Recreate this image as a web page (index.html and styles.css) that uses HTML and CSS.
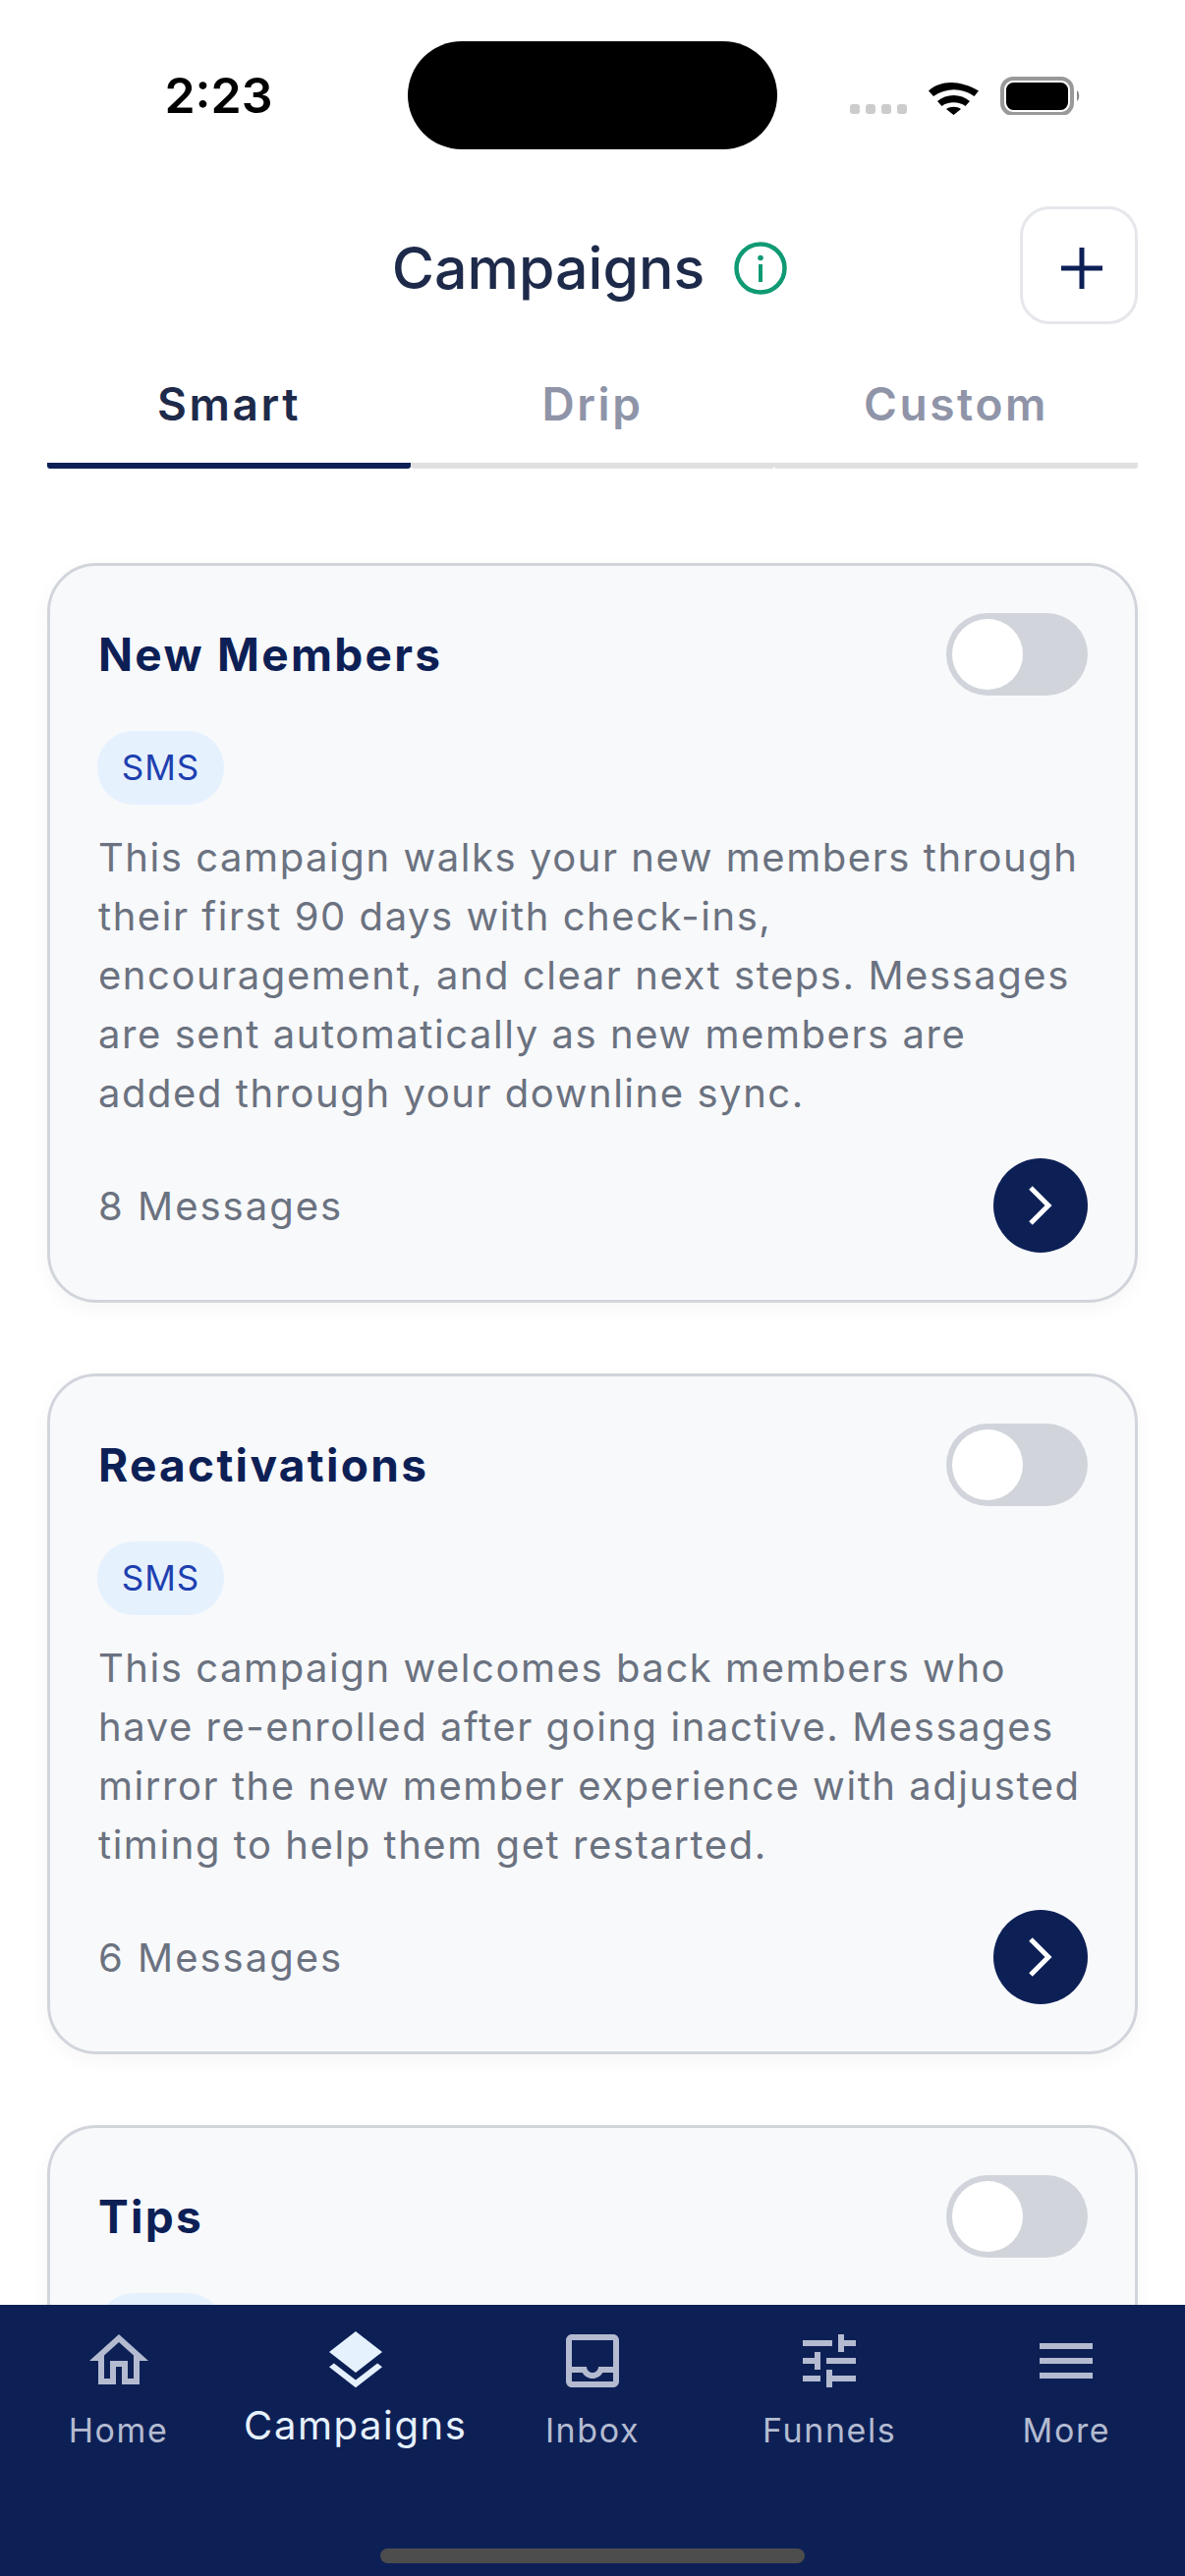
FILE: index.html
```html
<!DOCTYPE html>
<html>
<head>
  <title>Campaigns</title>
  <link rel="stylesheet" href="styles.css">
</head>
<body>
  <div class="statusbar">
    <div class="time">2:23</div>
    <div class="island"></div>
    <div class="status-icons">
      <svg width="235" height="39" viewBox="0 0 235 39">
        <rect x="0" y="28" width="10" height="10" rx="3" fill="#cccccc"/>
        <rect x="16" y="28" width="10" height="10" rx="3" fill="#cccccc"/>
        <rect x="32" y="28" width="10" height="10" rx="3" fill="#cccccc"/>
        <rect x="48" y="28" width="10" height="10" rx="3" fill="#cccccc"/>
        <path d="M80 14.500C92 3 112 3 131 14.500L126.500 20C114 11 98 11 85 20Z M89 25C98 17 113 17 122 25L117.500 30C111 25 100 25 93.500 30Z M98 33C102 30 109 30 113 33L105.500 39Z" fill="#000"/>
        <rect x="155" y="2" width="71" height="36" rx="11" fill="none" stroke="#999999" stroke-width="4"/>
        <rect x="159" y="6" width="63" height="28" rx="7.500" fill="#000"/>
        <path d="M231 14C234 16 234 23 231 25Z" fill="#888888"/>
      </svg>
    </div>
  </div>

  <div class="header">
    <div></div>
    <div class="title-wrap">
      <h1 class="title">Campaigns</h1>
      <svg class="info-icon" width="54" height="54" viewBox="0 0 54 54">
        <circle cx="27" cy="27" r="24.500" fill="none" stroke="#0f9a74" stroke-width="4.500"/>
        <circle cx="27" cy="16.500" r="2.800" fill="#0f9a74"/>
        <rect x="25" y="23" width="4" height="18" fill="#0f9a74"/>
      </svg>
    </div>
    <button class="add-btn">
      <svg width="42" height="42" viewBox="0 0 42 42"><path d="M21 0V42M0 21H42" stroke="#0d2056" stroke-width="5"/></svg>
    </button>
  </div>

  <div class="tabs">
    <div class="tab active">Smart</div>
    <div class="tab">Drip</div>
    <div class="tab">Custom</div>
  </div>

  <div class="content">
    <div class="card">
      <div class="card-top">
        <h2 class="card-title">New Members</h2>
        <div class="toggle"><div class="knob"></div></div>
      </div>
      <div class="badge">SMS</div>
      <p class="desc">This campaign walks your new members through their first 90 days with check-ins, encouragement, and clear next steps. Messages are sent automatically as new members are added through your downline sync.</p>
      <div class="card-bottom">
        <span class="count">8 Messages</span>
        <div class="go-btn">
          <svg width="26" height="42" viewBox="0 0 26 42"><path d="M3 3L21 21L3 39" fill="none" stroke="#fff" stroke-width="5"/></svg>
        </div>
      </div>
    </div>

    <div class="card">
      <div class="card-top">
        <h2 class="card-title">Reactivations</h2>
        <div class="toggle"><div class="knob"></div></div>
      </div>
      <div class="badge">SMS</div>
      <p class="desc">This campaign welcomes back members who have re-enrolled after going inactive. Messages mirror the new member experience with adjusted timing to help them get restarted.</p>
      <div class="card-bottom">
        <span class="count">6 Messages</span>
        <div class="go-btn">
          <svg width="26" height="42" viewBox="0 0 26 42"><path d="M3 3L21 21L3 39" fill="none" stroke="#fff" stroke-width="5"/></svg>
        </div>
      </div>
    </div>

    <div class="card">
      <div class="card-top">
        <h2 class="card-title">Tips</h2>
        <div class="toggle"><div class="knob"></div></div>
      </div>
      <div class="badge"></div>
    </div>
  </div>

  <div class="tabbar">
    <div class="nav-items">
      <div class="nav-item">
        <svg width="72" height="72" viewBox="0 0 24 24"><path d="M12 5.690l5 4.500V18h-2v-6H9v6H7v-7.810l5-4.500M12 3L2 12h3v8h6v-6h2v6h6v-8h3L12 3z"/></svg>
        <span class="nav-label">Home</span>
      </div>
      <div class="nav-item current">
        <svg width="72" height="72" viewBox="0 0 24 24"><path d="M11.990 18.540l-7.370-5.730L3 14.070l9 7 9-7-1.630-1.270-7.380 5.740zM12 16l7.360-5.730L21 9l-9-7-9 7 1.630 1.270L12 16z"/></svg>
        <span class="nav-label">Campaigns</span>
      </div>
      <div class="nav-item">
        <svg width="72" height="72" viewBox="0 0 24 24"><path d="M19 3H5c-1.100 0-2 .9-2 2v14c0 1.100.9 2 2 2h14c1.100 0 2-.9 2-2V5c0-1.100-.9-2-2-2zm0 16H5v-3h3.560c.69 1.190 1.970 2 3.450 2s2.750-.81 3.450-2H19v3zm0-5h-4.990c0 1.100-.9 2-2 2s-2-.9-2-2H5V5h14v9z"/></svg>
        <span class="nav-label">Inbox</span>
      </div>
      <div class="nav-item">
        <svg width="72" height="72" viewBox="0 0 24 24"><path d="M3 17v2h6v-2H3zM3 5v2h10V5H3zm10 16v-2h8v-2h-8v-2h-2v6h2zM7 9v2H3v2h4v2h2V9H7zm14 4v-2H11v2h10zm-6-4h2V7h4V5h-4V3h-2v6z"/></svg>
        <span class="nav-label">Funnels</span>
      </div>
      <div class="nav-item">
        <svg width="72" height="72" viewBox="0 0 24 24"><path d="M3 18h18v-2H3v2zm0-5h18v-2H3v2zm0-7v2h18V6H3z"/></svg>
        <span class="nav-label">More</span>
      </div>
    </div>
    <div class="home-bar"></div>
  </div>
</body>
</html>
```

FILE: styles.css
```css
* {
  box-sizing: border-box;
}

body {
  margin: 0;
  height: 2622px;
  overflow: hidden;
  display: flex;
  flex-direction: column;
  background-color: #ffffff;
  font-family: Inter, "Liberation Sans", sans-serif;
}

/* status bar */
.statusbar {
  display: grid;
  grid-template-columns: 415px 376px 415px;
  padding-top: 42px;
  height: 152px;
  flex-shrink: 0;
}

.time {
  padding-left: 30px;
  text-align: center;
  font-size: 50px;
  line-height: 110px;
  font-weight: 600;
  color: #000000;
}

.island {
  height: 110px;
  border-radius: 55px;
  background-color: #000000;
}

.status-icons {
  padding: 36px 0 0 74px;
}

.status-icons svg {
  display: block;
}

/* header */
.header {
  display: grid;
  grid-template-columns: 120px 1fr 120px;
  align-items: center;
  margin-top: 58px;
  padding-right: 48px;
  flex-shrink: 0;
}

.title-wrap {
  display: flex;
  align-items: center;
  justify-content: center;
  gap: 30px;
  padding-left: 42px;
}

.title {
  margin: 6px 0 0;
  font-size: 59px;
  font-weight: 500;
  line-height: 72px;
  color: #1e2a4a;
}

.info-icon {
  margin-top: 6px;
}

.add-btn {
  width: 120px;
  height: 120px;
  padding: 6px 0 0 6px;
  display: flex;
  align-items: center;
  justify-content: center;
  border: 3px solid #e5e7eb;
  border-radius: 30px;
  background-color: #ffffff;
}

/* tabs */
.tabs {
  display: flex;
  margin: 53px 48px 0;
  flex-shrink: 0;
}

.tab {
  flex: 1;
  padding-bottom: 32px;
  border-bottom: 6px solid #e0e0e0;
  border-radius: 3px;
  text-align: center;
  font-size: 46px;
  line-height: 56px;
  font-weight: 600;
  letter-spacing: 2.6px;
  color: #8f94a8;
}

.tab.active {
  color: #1e2a4a;
  border-bottom-color: #0d2056;
}

/* cards */
.content {
  flex: 1;
  min-height: 0;
  overflow: hidden;
  padding: 96px 48px 0;
  display: flex;
  flex-direction: column;
  gap: 72px;
}

.card {
  flex-shrink: 0;
  padding: 48px 48px 48px;
  border: 3px solid #d1d5db;
  border-radius: 50px;
  background-color: #f8f9fb;
  box-shadow: 0 6px 20px rgba(0, 0, 0, 0.04);
}

.card-top,
.card-bottom {
  display: flex;
  align-items: center;
  justify-content: space-between;
}

.card-title {
  margin: 0;
  padding-left: 1px;
  font-size: 46px;
  font-weight: 700;
  letter-spacing: 2.3px;
  color: #0d2056;
}

.toggle {
  width: 144px;
  height: 84px;
  padding: 6px;
  border-radius: 42px;
  background-color: #d1d5db;
}

.knob {
  width: 72px;
  height: 72px;
  border-radius: 50%;
  background-color: #ffffff;
}

.badge {
  width: 129px;
  height: 75px;
  margin-top: 36px;
  line-height: 75px;
  text-align: center;
  border-radius: 37px;
  background-color: #e6f1fe;
  font-size: 35px;
  letter-spacing: 1px;
  color: #1e40af;
}

.desc {
  margin: 24px 0 36px;
  padding-left: 1px;
  font-size: 40px;
  line-height: 60px;
  letter-spacing: 1.55px;
  color: #6b7280;
}

.count {
  padding-left: 1px;
  font-size: 40px;
  letter-spacing: 2px;
  color: #6b7280;
}

.go-btn {
  width: 96px;
  height: 96px;
  display: flex;
  align-items: center;
  justify-content: center;
  border-radius: 50%;
  background-color: #0d2056;
}

/* bottom nav */
.tabbar {
  height: 276px;
  flex-shrink: 0;
  display: flex;
  flex-direction: column;
  background-color: #0d2056;
}

.nav-items {
  display: grid;
  grid-template-columns: repeat(5, 1fr);
  padding-top: 21px;
}

.nav-item {
  display: flex;
  flex-direction: column;
  align-items: center;
  color: #b4bbd0;
}

.nav-item svg {
  fill: #b4bbd0;
}

.nav-item.current svg {
  fill: #e6f1fe;
}

.nav-label {
  margin-top: 11px;
  font-size: 34px;
  line-height: 48px;
  letter-spacing: 1.6px;
}

.nav-item.current .nav-label {
  margin-top: 6px;
  font-size: 40px;
  letter-spacing: 1.6px;
  color: #e6f1fe;
}

.home-bar {
  width: 432px;
  height: 15px;
  margin: 96px auto 0;
  border-radius: 8px;
  background-color: #4d4d4d;
}
```
